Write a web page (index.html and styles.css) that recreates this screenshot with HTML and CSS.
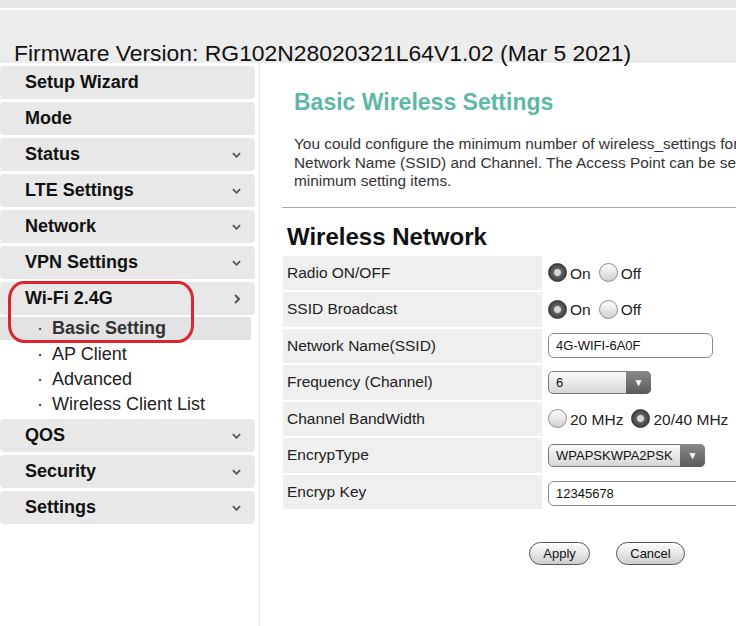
FILE: index.html
```html
<!DOCTYPE html>
<html lang="en">
<head>
    <meta charset="UTF-8">
    <meta name="viewport" content="width=device-width, initial-scale=1.0">
    <title>Basic Wireless Settings</title>
    <link rel="stylesheet" href="styles.css">
</head>
<body>
    <div class="top-strip"></div>
    <header class="header">
        <div class="firmware">Firmware Version: RG102N28020321L64V1.02 (Mar 5 2021)</div>
    </header>

    <div class="layout">
        <aside class="sidebar">
            <ul class="menu">
                <li class="menu-item"><span>Setup Wizard</span></li>
                <li class="menu-item"><span>Mode</span></li>
                <li class="menu-item"><span>Status</span><svg class="chev" viewBox="0 0 10 6"><path d="M1 1l4 4 4-4"/></svg></li>
                <li class="menu-item"><span>LTE Settings</span><svg class="chev" viewBox="0 0 10 6"><path d="M1 1l4 4 4-4"/></svg></li>
                <li class="menu-item"><span>Network</span><svg class="chev" viewBox="0 0 10 6"><path d="M1 1l4 4 4-4"/></svg></li>
                <li class="menu-item"><span>VPN Settings</span><svg class="chev" viewBox="0 0 10 6"><path d="M1 1l4 4 4-4"/></svg></li>
                <li class="menu-item open"><span>Wi-Fi 2.4G</span><svg class="chev chev-right" viewBox="0 0 6 10"><path d="M1 1l4 4-4 4"/></svg></li>
                <li class="submenu">
                    <ul>
                        <li class="sub-item active">Basic Setting</li>
                        <li class="sub-item">AP Client</li>
                        <li class="sub-item">Advanced</li>
                        <li class="sub-item">Wireless Client List</li>
                    </ul>
                </li>
                <li class="menu-item"><span>QOS</span><svg class="chev" viewBox="0 0 10 6"><path d="M1 1l4 4 4-4"/></svg></li>
                <li class="menu-item"><span>Security</span><svg class="chev" viewBox="0 0 10 6"><path d="M1 1l4 4 4-4"/></svg></li>
                <li class="menu-item"><span>Settings</span><svg class="chev" viewBox="0 0 10 6"><path d="M1 1l4 4 4-4"/></svg></li>
            </ul>
        </aside>

        <main class="content">
            <div class="intro">
                <h1>Basic Wireless Settings</h1>
                <p>You could configure the minimum number of wireless_settings for communication, such as<br>
                Network Name (SSID) and Channel. The Access Point can be set simply with only the<br>
                minimum setting items.</p>
            </div>
            <hr>

            <h2>Wireless Network</h2>
            <form class="form">
                <div class="form-grid">
                    <div class="label">Radio ON/OFF</div>
                    <div class="value">
                        <label class="opt"><input type="radio" name="radio" checked>On</label>
                        <label class="opt"><input type="radio" name="radio">Off</label>
                    </div>

                    <div class="label">SSID Broadcast</div>
                    <div class="value">
                        <label class="opt"><input type="radio" name="bcast" checked>On</label>
                        <label class="opt"><input type="radio" name="bcast">Off</label>
                    </div>

                    <div class="label">Network Name(SSID)</div>
                    <div class="value">
                        <input class="text-input ssid" type="text" value="4G-WIFI-6A0F">
                    </div>

                    <div class="label">Frequency (Channel)</div>
                    <div class="value">
                        <span class="select-wrap"><select class="select channel"><option>6</option></select></span>
                    </div>

                    <div class="label">Channel BandWidth</div>
                    <div class="value">
                        <label class="opt"><input type="radio" name="bw">20 MHz</label>
                        <label class="opt"><input type="radio" name="bw" checked>20/40 MHz</label>
                    </div>

                    <div class="label">EncrypType</div>
                    <div class="value">
                        <span class="select-wrap"><select class="select encryp"><option>WPAPSKWPA2PSK</option></select></span>
                    </div>

                    <div class="label">Encryp Key</div>
                    <div class="value">
                        <input class="text-input key" type="text" value="12345678">
                    </div>
                </div>

                <div class="buttons">
                    <button type="button" class="btn">Apply</button>
                    <button type="button" class="btn">Cancel</button>
                </div>
            </form>
        </main>
    </div>

    <!-- red marker drawn over the menu -->
    <div class="marker"></div>
</body>
</html>
```

FILE: styles.css
```css
/* General styles */
html, body {
    overflow: hidden;
}

body {
    font-family: 'Liberation Sans', Arial, sans-serif;
    background-color: #fff;
    color: #222;
    margin: 0;
    padding: 0;
}

.top-strip {
    height: 8px;
    background-color: #e6e6e6;
    border-bottom: 2px solid #fff;
}

.header {
    height: 53px;
    background-color: #ececec;
    display: flex;
    align-items: flex-end;
    padding-left: 14px;
}

.firmware {
    font-size: 22.9px;
    line-height: 23px;
    color: #111;
    white-space: nowrap;
    margin-bottom: -2px;
}

.layout {
    display: flex;
    min-height: 563px;
}

/* Sidebar */
.sidebar {
    width: 259px;
    flex-shrink: 0;
    border-right: 1px solid #e2e2e2;
    padding-top: 3px;
}

.menu {
    list-style: none;
    margin: 0;
    padding: 0;
    width: 255px;
}

.menu-item {
    height: 33px;
    margin-bottom: 3px;
    background-color: #e8e8e8;
    border-radius: 4px;
    display: flex;
    align-items: center;
    justify-content: space-between;
    padding: 0 14px 0 25px;
    font-size: 18px;
    font-weight: bold;
    color: #111;
}

.menu-item.open {
    margin-bottom: 2px;
}

.chev {
    width: 9px;
    height: 6px;
    fill: none;
    stroke: #555;
    stroke-width: 2;
}

.chev-right {
    width: 6px;
    height: 10px;
    margin-right: 1px;
}

.submenu ul {
    list-style: none;
    margin: 0 0 2px;
    padding: 0;
}

.sub-item {
    height: 25px;
    line-height: 25px;
    font-size: 18px;
    color: #222;
    padding-left: 37px;
    width: 251px;
    box-sizing: border-box;
}

.sub-item::before {
    content: "·";
    display: inline-block;
    width: 15px;
}

.sub-item.active {
    background-color: #e3e3e3;
    font-weight: bold;
    color: #333;
    height: 23px;
    line-height: 23px;
    margin-bottom: 2px;
}

.sub-item.active::before {
    font-weight: normal;
}

/* Content */
.content {
    flex: 1;
    min-width: 0;
    overflow: hidden;
    padding-left: 22px;
}

.intro {
    padding-left: 12px;
}

.intro h1 {
    font-size: 23px;
    line-height: 28px;
    color: #5db8a4;
    margin: 25px 0 19px;
}

.intro p {
    font-size: 15.4px;
    line-height: 18.5px;
    color: #333;
    white-space: nowrap;
    margin: 0 0 16px;
}

hr {
    border: none;
    border-top: 1px solid #a8a8a8;
    margin: 0;
    width: 700px;
}

h2 {
    font-size: 24px;
    line-height: 28px;
    color: #111;
    margin: 15px 0 5px 5px;
}

.form {
    margin-left: 1px;
    width: 648px;
}

.form-grid {
    display: grid;
    grid-template-columns: 259px 500px;
    grid-auto-rows: 34.5px;
    row-gap: 2px;
}

.label {
    background-color: #efefef;
    font-size: 15.5px;
    color: #222;
    padding-left: 4px;
    display: flex;
    align-items: center;
}

.value {
    padding-left: 6px;
    display: flex;
    align-items: center;
    font-size: 15.5px;
    color: #222;
}

.opt {
    display: inline-flex;
    align-items: center;
    gap: 3px;
    margin-right: 8px;
    padding-top: 2px;
}

.opt input {
    appearance: none;
    -webkit-appearance: none;
    width: 19px;
    height: 19px;
    margin: -2px 0 0;
    border-radius: 50%;
    border: 1px solid #8d8d8d;
    background: linear-gradient(#ffffff, #cfcfcf);
    box-sizing: border-box;
}

.opt input:checked {
    border-color: #3a3a3a;
    background: radial-gradient(circle, #d8d8d8 0 3px, #666 4px, #3b3b3b 9px);
}

.text-input {
    height: 25px;
    box-sizing: border-box;
    border: 1px solid #8a8a8a;
    border-radius: 6px;
    padding: 0 7px;
    font-family: 'Liberation Sans', Arial, sans-serif;
    font-size: 13px;
    color: #111;
    background: #fff;
}

.ssid {
    width: 165px;
}

.key {
    width: 240px;
    margin-top: 3px;
}

.select-wrap {
    position: relative;
    display: inline-block;
}

.select-wrap::after {
    content: "▼";
    position: absolute;
    top: 0;
    right: 0;
    bottom: 0;
    width: 25px;
    border-radius: 0 5px 5px 0;
    background: linear-gradient(#8a8a8a, #5a5a5a);
    color: #fff;
    font-size: 10px;
    display: flex;
    align-items: center;
    justify-content: center;
    pointer-events: none;
}

.select {
    appearance: none;
    -webkit-appearance: none;
    height: 23px;
    box-sizing: border-box;
    border: 1px solid #777;
    border-radius: 5px;
    padding: 0 7px;
    font-family: 'Liberation Sans', Arial, sans-serif;
    font-size: 13px;
    color: #111;
    background: linear-gradient(#fbfbfb, #d6d6d6);
    display: block;
}

.channel {
    width: 103px;
}

.encryp {
    width: 157px;
}

.buttons {
    text-align: center;
    margin-top: 33px;
}

.btn {
    height: 23px;
    padding: 0 13px;
    margin: 0 11px;
    border: 1px solid #555;
    border-radius: 12px;
    background: linear-gradient(#ffffff, #cdcdcd);
    font-family: 'Liberation Sans', Arial, sans-serif;
    font-size: 13px;
    color: #111;
}

/* Annotation over the menu */
.marker {
    position: absolute;
    left: 8px;
    top: 281px;
    width: 186px;
    height: 62px;
    box-sizing: border-box;
    border: 3px solid #d9262f;
    border-radius: 16px / 18px;
    pointer-events: none;
}
```
